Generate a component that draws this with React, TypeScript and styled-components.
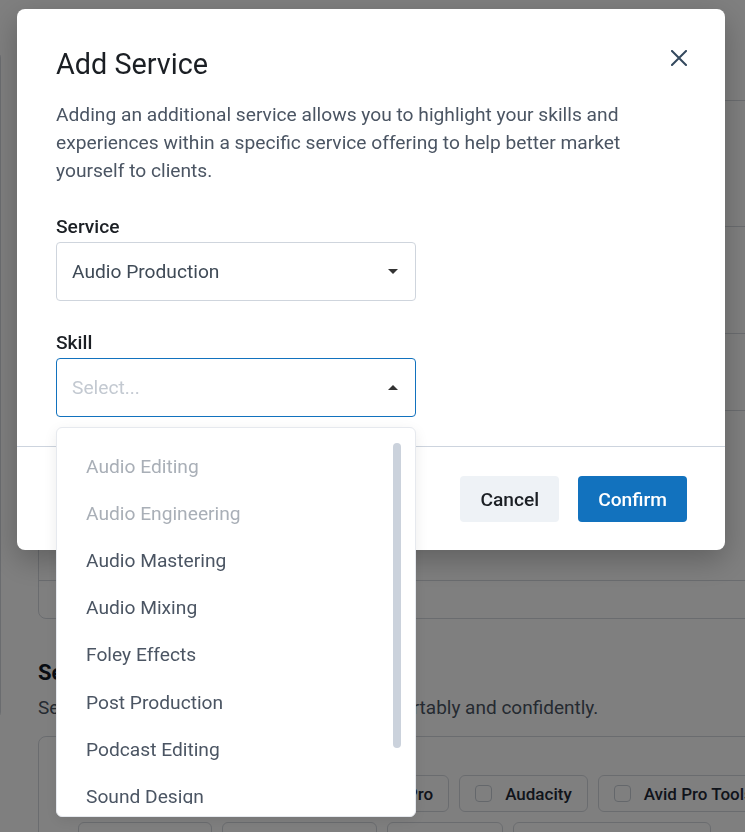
import React from 'react';
import styled, { createGlobalStyle } from 'styled-components';

const GlobalStyle = createGlobalStyle`
    html, body {
        margin:0;
        padding:0;
        overflow:hidden;
        background:#fff;
    }
    body {
        font-family: Roboto, "Noto Sans", Arial, sans-serif;
    }
`;

/* ---------- page behind the dialog ---------- */

const Page = styled.div`
    display:flex;
    align-items:flex-start;
    width:745px;
    height:832px;
    overflow:hidden;
`;

const Sidebar = styled.div`
    flex:none;
    width:300px;
    height:670px;
    margin:50px 0 0 -299px;
    border:1px solid #d5d9df;
    border-radius:8px;
    box-sizing:border-box;
`;

const Main = styled.div`
    flex:none;
    width:900px;
    margin-left:37px;
    padding-top:100px;
`;

const DetailsCard = styled.div`
    border:1px solid #d5d9df;
    border-radius:8px;
`;

const DetailsRow = styled.div<{ $h: number }>`
    height:${p => p.$h}px;
    & + & {
        border-top:1px solid #d5d9df;
    }
`;

const SectionTitle = styled.h3`
    margin:40px 0 0;
    font-size:22px;
    line-height:28px;
    font-weight:700;
    color:#111827;
`;

const SectionText = styled.p`
    margin:8px 0 0;
    font-size:19px;
    line-height:26px;
    color:#4b5563;
`;

const ChipCard = styled.div`
    margin-top:15px;
    padding:38px 39px;
    border:1px solid #d5d9df;
    border-radius:8px;
`;

const ChipGrid = styled.div`
    display:flex;
    flex-wrap:wrap;
    gap:10px;
    width:700px;
`;

const Chip = styled.label`
    display:flex;
    align-items:center;
    gap:13px;
    height:37px;
    padding:0 15px;
    box-sizing:border-box;
    border:1px solid #d5d9df;
    border-radius:6px;
    font-size:17px;
    font-weight:500;
    color:#1f2937;
    white-space:nowrap;
`;

const ChipBox = styled.span`
    width:17px;
    height:17px;
    box-sizing:border-box;
    border:1px solid #c9ced6;
    border-radius:4px;
`;

/* ---------- dialog ---------- */

const Overlay = styled.div`
    position:fixed;
    inset:0;
    background:rgba(0,0,0,0.5);
    padding:9px 0 0 17px;
    box-sizing:border-box;
`;

const Modal = styled.div`
    width:708px;
    background:#fff;
    border-radius:8px;
    box-shadow:0 10px 30px rgba(0,0,0,0.25);
`;

const ModalBody = styled.div`
    padding:37px 38px 29px 39px;
`;

const ModalHeader = styled.div`
    display:flex;
    justify-content:space-between;
    align-items:flex-start;
`;

const Title = styled.h2`
    margin:0;
    font-size:28.8px;
    line-height:36px;
    font-weight:400;
    color:#1b1f24;
`;

const CloseButton = styled.button`
    border:none;
    background:none;
    padding:0;
    margin-top:4px;
    width:16px;
    height:16px;
    display:flex;
    cursor:pointer;
`;

const Description = styled.p`
    margin:19px 0 0;
    max-width:600px;
    font-size:19.2px;
    line-height:28px;
    color:#4b5563;
`;

const Field = styled.div`
    position:relative;
    margin-top:30px;
    width:360px;
`;

const Label = styled.div`
    margin-bottom:3px;
    font-size:19.2px;
    line-height:24px;
    font-weight:500;
    color:#1b1f24;
`;

const SelectBox = styled.div<{ $focused?: boolean }>`
    display:flex;
    align-items:center;
    justify-content:space-between;
    height:59px;
    padding:0 17px 0 15px;
    box-sizing:border-box;
    border:1px solid ${p => p.$focused ? '#1272be' : '#cfd5dd'};
    border-radius:4px;
    font-size:19.2px;
`;

const SelectValue = styled.span<{ $placeholder?: boolean }>`
    color:${p => p.$placeholder ? '#c3c9d1' : '#3f4a56'};
`;

const Caret = styled.span<{ $up?: boolean }>`
    width:0;
    height:0;
    border-left:5px solid transparent;
    border-right:5px solid transparent;
    ${p => p.$up ? 'border-bottom:5px solid #333;' : 'border-top:5px solid #333;'}
`;

const Menu = styled.div`
    position:absolute;
    top:calc(100% + 10px);
    left:0;
    width:360px;
    height:390px;
    padding:15px 0 12px;
    box-sizing:border-box;
    background:#fff;
    border:1px solid #e6e9ee;
    border-radius:6px;
    box-shadow:0 4px 14px rgba(0,0,0,0.08);
    z-index:10;
`;

const MenuList = styled.div`
    height:100%;
    overflow:hidden;
`;

const MenuItem = styled.div<{ $disabled?: boolean }>`
    display:flex;
    align-items:center;
    height:47.1px;
    padding-left:29px;
    font-size:19.2px;
    color:${p => p.$disabled ? '#a9afb7' : '#4b5563'};
`;

const ScrollThumb = styled.div`
    position:absolute;
    top:15px;
    right:14px;
    width:8px;
    height:305px;
    border-radius:4px;
    background:#cbd2dc;
`;

const Footer = styled.div`
    display:flex;
    justify-content:flex-end;
    gap:19px;
    padding:29px 38px 28px;
    border-top:1px solid #cdd4de;
`;

const Button = styled.button<{ $primary?: boolean }>`
    height:46px;
    padding:0 20px;
    border:none;
    border-radius:4px;
    font-family:inherit;
    font-size:19.2px;
    font-weight:500;
    background:${p => p.$primary ? '#1272be' : '#eef2f6'};
    color:${p => p.$primary ? '#fff' : '#1b1f24'};
    cursor:pointer;
`;

const skills = [
    { name: 'Audio Editing', disabled: true },
    { name: 'Audio Engineering', disabled: true },
    { name: 'Audio Mastering' },
    { name: 'Audio Mixing' },
    { name: 'Foley Effects' },
    { name: 'Post Production' },
    { name: 'Podcast Editing' },
    { name: 'Sound Design' },
    { name: 'Voice Over' },
];

const software = [
    'Adobe Audition', 'Apple Logic Pro', 'Audacity', 'Avid Pro Tools',
    'FL Studio', 'GarageBand', 'Reaper', 'Steinberg Nuendo',
];

const App: React.FC = () => {
    return <>
        <GlobalStyle />
        <Page>
            <Sidebar />
            <Main>
                <DetailsCard>
                    <DetailsRow $h={125} />
                    <DetailsRow $h={106} />
                    <DetailsRow $h={76} />
                    <DetailsRow $h={169} />
                    <DetailsRow $h={37} />
                </DetailsCard>
                <SectionTitle>Select Software</SectionTitle>
                <SectionText>Select the software tools you can use comfortably and confidently.</SectionText>
                <ChipCard>
                    <ChipGrid>
                        {software.map(s => <Chip key={s}><ChipBox />{s}</Chip>)}
                    </ChipGrid>
                </ChipCard>
            </Main>
        </Page>
        <Overlay>
            <Modal>
                <ModalBody>
                    <ModalHeader>
                        <Title>Add Service</Title>
                        <CloseButton aria-label="Close">
                            <svg width="16" height="16" viewBox="0 0 16 16">
                                <path d="M1 1L15 15M15 1L1 15" stroke="#34495e" strokeWidth="2" strokeLinecap="square" />
                            </svg>
                        </CloseButton>
                    </ModalHeader>
                    <Description>
                        Adding an additional service allows you to highlight your skills and experiences within a specific service offering to help better market yourself to clients.
                    </Description>
                    <Field>
                        <Label>Service</Label>
                        <SelectBox>
                            <SelectValue>Audio Production</SelectValue>
                            <Caret />
                        </SelectBox>
                    </Field>
                    <Field>
                        <Label>Skill</Label>
                        <SelectBox $focused>
                            <SelectValue $placeholder>Select...</SelectValue>
                            <Caret $up />
                        </SelectBox>
                        <Menu>
                            <MenuList>
                                {skills.map(s => <MenuItem key={s.name} $disabled={s.disabled}>{s.name}</MenuItem>)}
                            </MenuList>
                            <ScrollThumb />
                        </Menu>
                    </Field>
                </ModalBody>
                <Footer>
                    <Button>Cancel</Button>
                    <Button $primary>Confirm</Button>
                </Footer>
            </Modal>
        </Overlay>
    </>;
}

export default App;
